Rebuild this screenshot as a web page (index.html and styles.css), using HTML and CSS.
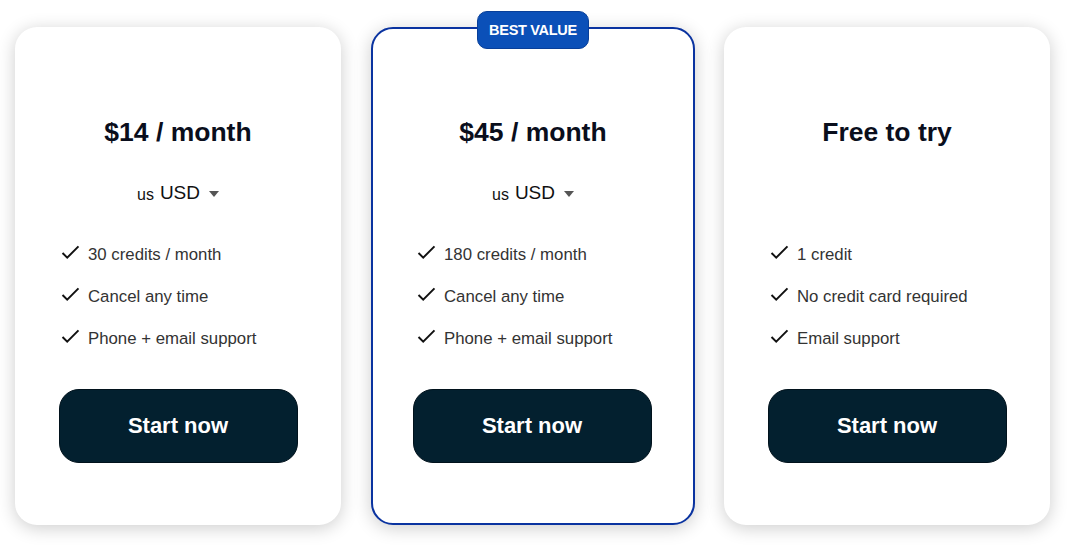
FILE: index.html
```html
<!DOCTYPE html>
<html>
<head>
<meta charset="utf-8">
<link rel="stylesheet" href="styles.css">
</head>
<body>
<div class="plans">
  <div class="card">
    <h2 class="price">$14 / month</h2>
    <div class="currency"><span class="flag">us</span><span class="code">USD</span><span class="caret"></span></div>
    <ul class="features">
      <li><svg class="check" viewBox="0 0 20 16"><path d="M1.5 8.5 L6.5 13.5 L18.5 1.5"/></svg>30 credits / month</li>
      <li><svg class="check" viewBox="0 0 20 16"><path d="M1.5 8.5 L6.5 13.5 L18.5 1.5"/></svg>Cancel any time</li>
      <li><svg class="check" viewBox="0 0 20 16"><path d="M1.5 8.5 L6.5 13.5 L18.5 1.5"/></svg>Phone + email support</li>
    </ul>
    <button class="start">Start now</button>
  </div>
  <div class="card featured">
    <div class="badge">BEST VALUE</div>
    <h2 class="price">$45 / month</h2>
    <div class="currency"><span class="flag">us</span><span class="code">USD</span><span class="caret"></span></div>
    <ul class="features">
      <li><svg class="check" viewBox="0 0 20 16"><path d="M1.5 8.5 L6.5 13.5 L18.5 1.5"/></svg>180 credits / month</li>
      <li><svg class="check" viewBox="0 0 20 16"><path d="M1.5 8.5 L6.5 13.5 L18.5 1.5"/></svg>Cancel any time</li>
      <li><svg class="check" viewBox="0 0 20 16"><path d="M1.5 8.5 L6.5 13.5 L18.5 1.5"/></svg>Phone + email support</li>
    </ul>
    <button class="start">Start now</button>
  </div>
  <div class="card last">
    <h2 class="price">Free to try</h2>
    <div class="currency empty"></div>
    <ul class="features">
      <li><svg class="check" viewBox="0 0 20 16"><path d="M1.5 8.5 L6.5 13.5 L18.5 1.5"/></svg>1 credit</li>
      <li><svg class="check" viewBox="0 0 20 16"><path d="M1.5 8.5 L6.5 13.5 L18.5 1.5"/></svg>No credit card required</li>
      <li><svg class="check" viewBox="0 0 20 16"><path d="M1.5 8.5 L6.5 13.5 L18.5 1.5"/></svg>Email support</li>
    </ul>
    <button class="start">Start now</button>
  </div>
</div>
</body>
</html>
```
FILE: styles.css
```css
* { box-sizing: border-box; }
html, body { margin: 0; padding: 0; background: #fff; }
body {
  font-family: "Liberation Sans", Arial, sans-serif;
  width: 1070px;
  height: 547px;
  overflow: hidden;
}
.plans {
  display: flex;
  gap: 30px;
  padding: 27px 0 0 15px;
}
.card {
  position: relative;
  width: 326px;
  height: 498px;
  background: #fff;
  border-radius: 22px;
  box-shadow: 0 3px 18px rgba(0, 0, 0, 0.2);
  display: flex;
  flex-direction: column;
  align-items: center;
  padding: 90px 0 0 0;
}
.card.featured {
  width: 324px;
  border: 2px solid #0a33a0;
  padding-top: 88px;
}
.card.last { margin-left: -1px; }
.badge {
  position: absolute;
  top: -18px;
  left: 50%;
  transform: translateX(-50%);
  width: 112px;
  height: 38px;
  border-radius: 10px;
  background: #0b50b8;
  border: 1px solid #083f99;
  color: #fff;
  font-weight: 700;
  font-size: 14.5px;
  letter-spacing: -0.3px;
  display: flex;
  align-items: center;
  justify-content: center;
}
.price {
  margin: 0;
  font-size: 26.5px;
  line-height: 30px;
  font-weight: 700;
  color: #0a0e1c;
}
.currency {
  margin-top: 34px;
  height: 24px;
  display: flex;
  align-items: center;
  color: #111;
}
.flag {
  font-size: 16px;
  margin-right: 6px;
  margin-top: 3px;
}
.code {
  font-size: 19px;
  line-height: 24px;
}
.caret {
  width: 0;
  height: 0;
  border-left: 5.5px solid transparent;
  border-right: 5.5px solid transparent;
  border-top: 6px solid #555;
  margin-left: 9px;
  margin-top: 2px;
}
.features {
  list-style: none;
  margin: 29px 0 0 0;
  padding: 0 0 0 46px;
  align-self: stretch;
}
.card.featured .features { padding-left: 44px; }
.features li {
  height: 42px;
  display: flex;
  align-items: center;
  font-size: 16.8px;
  color: #333;
}
.check {
  width: 19px;
  height: 15px;
  margin-right: 8px;
  margin-top: -5px;
  fill: none;
  stroke: #111;
  stroke-width: 2.1;
}
.card.featured .start { margin-left: -2px; }
.start {
  margin-top: 29px;
  width: 239px;
  height: 74px;
  border: 1px solid #01121c;
  border-radius: 20px;
  background: #03202f;
  color: #fff;
  font-family: "Liberation Sans", Arial, sans-serif;
  font-weight: 700;
  font-size: 22px;
  cursor: pointer;
}
```
